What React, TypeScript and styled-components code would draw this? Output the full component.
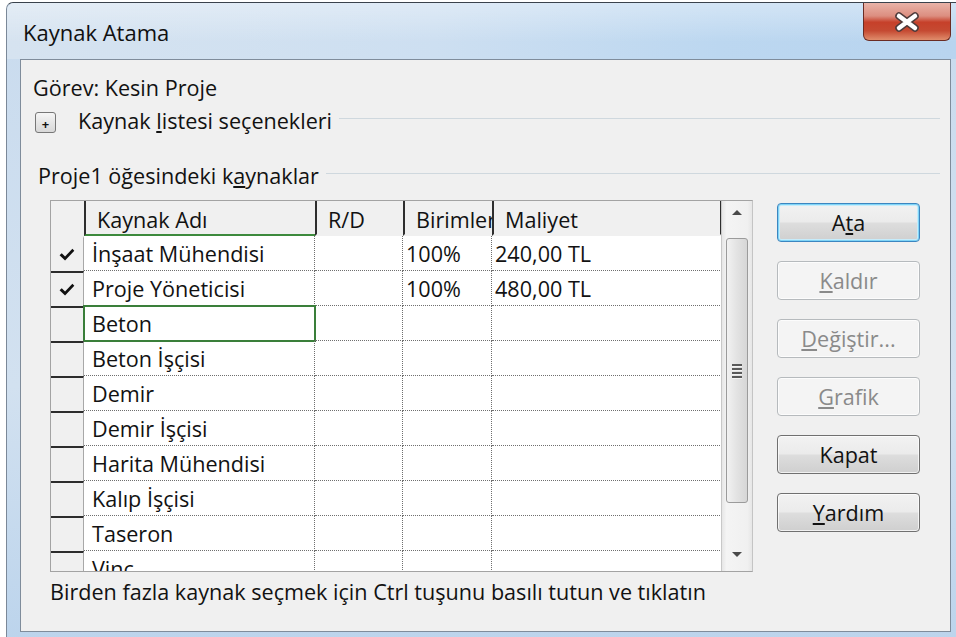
import React from 'react';
import styled, { createGlobalStyle } from 'styled-components';

const FONT = `"Open Sans", "Noto Sans", "Liberation Sans", sans-serif`;

const GlobalStyle = createGlobalStyle`
  html, body {
    margin: 0;
    padding: 0;
    background: #ffffff;
    overflow: hidden;
  }
  body {
    font-family: ${FONT};
    color: #121212;
  }
`;

interface Resource {
  name: string;
  rd?: string;
  units?: string;
  cost?: string;
  assigned?: boolean;
}

const RESOURCES: Resource[] = [
  { name: 'İnşaat Mühendisi', units: '100%', cost: '240,00 TL', assigned: true },
  { name: 'Proje Yöneticisi', units: '100%', cost: '480,00 TL', assigned: true },
  { name: 'Beton' },
  { name: 'Beton İşçisi' },
  { name: 'Demir' },
  { name: 'Demir İşçisi' },
  { name: 'Harita Mühendisi' },
  { name: 'Kalıp İşçisi' },
  { name: 'Taseron' },
  { name: 'Vinç' },
];

const COLS = { sel: 33, name: 231, rd: 88, units: 89, cost: 230 };

const Frame = styled.div`
  margin: 2px 0 0 6px;
  width: 950px;
  height: 640px;
  box-sizing: border-box;
  border-top: 1px solid #3a424c;
  border-left: 1px solid #7b8898;
  border-top-left-radius: 7px;
  background: linear-gradient(180deg, #c9dbee 0%, #d2e1f0 60%, #bcd4ec 100%);
  display: flex;
  flex-direction: column;
`;

const TitleBar = styled.div`
  height: 56px;
  display: flex;
  align-items: flex-start;
  background:
    linear-gradient(180deg, rgba(255, 255, 255, 0.35) 0%, rgba(255, 255, 255, 0) 70%),
    linear-gradient(90deg, #d6e3f0 0%, #cddff1 45%, #bcd7f0 75%, #b8d4ef 100%);
  border-top-left-radius: 7px;
`;

const Title = styled.div`
  padding: 15px 0 0 16px;
  font-size: 22px;
  line-height: 28px;
  color: #101010;
`;

const CloseButton = styled.div`
  margin-left: auto;
  margin-right: 5px;
  width: 88px;
  height: 38px;
  box-sizing: border-box;
  border: 1px solid #6a2c24;
  border-top: none;
  border-radius: 0 0 6px 6px;
  background: linear-gradient(
    180deg,
    #e9b3a8 0%,
    #dc8e80 35%,
    #c6402a 52%,
    #c54a32 75%,
    #e08d6c 100%
  );
  display: flex;
  align-items: center;
  justify-content: center;
`;

const Client = styled.div`
  margin: 0 5px 0 13px;
  height: 573px;
  box-sizing: border-box;
  border: 1px solid #7f8c9b;
  background: #f0f0f0;
  display: flex;
  flex-direction: column;
  font-size: 21.6px;
`;

const TaskLabel = styled.div`
  margin: 15px 0 0 12px;
  line-height: 26px;
`;

const LabelRow = styled.div<{ $indent: number; $top: number }>`
  display: flex;
  align-items: center;
  margin: ${(p) => p.$top}px 10px 0 ${(p) => p.$indent}px;
  height: 26px;
  gap: 7px;
`;

const Rule = styled.div`
  flex: 1;
  height: 0;
  border-top: 1px solid #cfd8de;
  margin-top: -4px;
`;

const ExpandBox = styled.div`
  width: 21px;
  height: 21px;
  box-sizing: border-box;
  border: 1px solid #777777;
  border-radius: 3px;
  background: linear-gradient(180deg, #f6f6f6 0%, #e6e6e6 50%, #d8d8d8 100%);
  display: flex;
  align-items: flex-end;
  justify-content: center;
  font-size: 13px;
  line-height: 16px;
  font-weight: 700;
  margin: 4px 15px 0 0;
`;

const Body = styled.div`
  display: flex;
  margin: 12px 0 0 29px;
`;

const GridBox = styled.div`
  width: 703px;
  height: 372px;
  box-sizing: border-box;
  border: 1px solid #a3a3a3;
  border-right-color: #c4c4c4;
  background: #ffffff;
  display: flex;
  overflow: hidden;
`;

const Table = styled.div`
  width: 671px;
  overflow: hidden;
`;

const HeaderRow = styled.div`
  display: flex;
  height: 35px;
  background: #f0f0f0;
`;

const HeaderCell = styled.div<{ $w: number; $mark?: boolean; $last?: boolean }>`
  width: ${(p) => p.$w}px;
  flex: none;
  box-sizing: border-box;
  border-left: 2px solid #2e2e2e;
  border-right: ${(p) => (p.$last ? '2px solid #2e2e2e' : 'none')};
  border-bottom: 2px solid ${(p) => (p.$mark ? '#3d8a3d' : 'transparent')};
  padding: 5px 0 0 11px;
  line-height: 28px;
  white-space: nowrap;
  overflow: hidden;
`;

const SelectorHead = styled.div`
  width: ${COLS.sel}px;
  flex: none;
`;

const Row = styled.div`
  display: flex;
  height: 35px;
`;

const SelectorCell = styled.div<{ $first: boolean }>`
  width: ${COLS.sel}px;
  flex: none;
  box-sizing: border-box;
  background: #f0f0f0;
  border-top: 2px solid ${(p) => (p.$first ? 'transparent' : '#2c2c2c')};
  border-right: 1px solid #a8a8a8;
  display: flex;
  align-items: center;
  justify-content: center;
`;

const Cell = styled.div<{ $w: number; $pad: number; $focus?: boolean }>`
  width: ${(p) => p.$w}px;
  flex: none;
  box-sizing: border-box;
  border-right: 1px dotted #6f6f6f;
  border-bottom: 1px dotted #6f6f6f;
  padding-left: ${(p) => p.$pad}px;
  line-height: 35px;
  white-space: nowrap;
  overflow: hidden;
  outline: ${(p) => (p.$focus ? '2px solid #3a7f3a' : 'none')};
  outline-offset: -1px;
`;

const ScrollBar = styled.div`
  width: 30px;
  flex: none;
  background: linear-gradient(90deg, #e6e6e6 0%, #f4f4f4 15%, #f0f0f0 85%, #e6e6e6 100%);
  border-left: 1px solid #c8c8c8;
  display: flex;
  flex-direction: column;
  align-items: center;
`;

const Arrow = styled.div<{ $down?: boolean }>`
  height: 35px;
  width: 100%;
  display: flex;
  align-items: ${(p) => (p.$down ? 'flex-start' : 'center')};
  justify-content: center;
  padding-top: ${(p) => (p.$down ? '16px' : '0')};
  box-sizing: border-box;
  &::before {
    content: '';
    width: 0;
    height: 0;
    border-left: 5px solid transparent;
    border-right: 5px solid transparent;
    ${(p) =>
      p.$down ? 'border-top: 5px solid #4a4a4a;' : 'border-bottom: 5px solid #4a4a4a; margin-top: -12px;'}
  }
`;

const Thumb = styled.div`
  width: 22px;
  height: 265px;
  margin-top: 2px;
  box-sizing: border-box;
  border: 1px solid #9b9b9b;
  border-radius: 3px;
  background: linear-gradient(90deg, #f2f2f2 0%, #e4e4e4 45%, #d6d6d6 100%);
  display: flex;
  flex-direction: column;
  align-items: center;
  justify-content: center;
  gap: 2px;
`;

const Grip = styled.div`
  width: 10px;
  height: 2px;
  background: #5a5a5a;
  box-shadow: 0 1px 0 #f4f4f4;
`;

const Track = styled.div`
  flex: 1;
`;

const Buttons = styled.div`
  display: flex;
  flex-direction: column;
  gap: 19px;
  margin: 3px 0 0 24px;
`;

const Button = styled.div<{ $default?: boolean; $disabled?: boolean }>`
  width: 143px;
  height: 39px;
  box-sizing: border-box;
  border: 1px solid ${(p) => (p.$default ? '#3c86c0' : p.$disabled ? '#b6babd' : '#707070')};
  border-radius: 4px;
  background: ${(p) =>
    p.$disabled
      ? '#f4f4f4'
      : 'linear-gradient(180deg, #f2f2f2 0%, #ebebeb 48%, #dddddd 52%, #cfcfcf 100%)'};
  box-shadow: ${(p) =>
    p.$default ? 'inset 0 0 0 1px #7fd4f7, inset 0 0 0 2px #c6ecfb' : 'inset 0 0 0 1px rgba(255,255,255,0.7)'};
  color: ${(p) => (p.$disabled ? '#8a8a8a' : '#121212')};
  display: flex;
  align-items: center;
  justify-content: center;
  line-height: 28px;
`;

const Footer = styled.div`
  margin: 6px 0 0 29px;
  line-height: 28px;
`;

const CheckMark = () => (
  <svg width="16" height="14" viewBox="0 0 14 12">
    <path d="M0.5 6.2 L2.4 4.4 L5.3 7.3 L11.7 0.6 L13.4 2.3 L5.3 10.8 Z" fill="#111" />
  </svg>
);

const CloseGlyph = () => (
  <svg width="28" height="20" viewBox="0 0 28 20">
    <path d="M6 4 L22 16 M22 4 L6 16" stroke="#4d3a3a" strokeWidth="7.5" strokeLinecap="round" />
    <path d="M6 4 L22 16 M22 4 L6 16" stroke="#ffffff" strokeWidth="4.5" strokeLinecap="round" />
  </svg>
);

const App = () => {
  return (
    <>
      <GlobalStyle />
      <Frame>
        <TitleBar>
          <Title>Kaynak Atama</Title>
          <CloseButton>
            <CloseGlyph />
          </CloseButton>
        </TitleBar>
        <Client>
          <TaskLabel>Görev: Kesin Proje</TaskLabel>
          <LabelRow $indent={14} $top={6}>
            <ExpandBox>+</ExpandBox>
            <span>
              Kaynak <u>l</u>istesi seçenekleri
            </span>
            <Rule />
          </LabelRow>
          <LabelRow $indent={17} $top={29}>
            <span>
              Proje1 öğesindeki k<u>a</u>ynaklar
            </span>
            <Rule />
          </LabelRow>
          <Body>
            <GridBox>
              <Table>
                <HeaderRow>
                  <SelectorHead />
                  <HeaderCell $w={COLS.name} $mark>
                    Kaynak Adı
                  </HeaderCell>
                  <HeaderCell $w={COLS.rd}>R/D</HeaderCell>
                  <HeaderCell $w={COLS.units}>Birimler</HeaderCell>
                  <HeaderCell $w={COLS.cost} $last>
                    Maliyet
                  </HeaderCell>
                </HeaderRow>
                {RESOURCES.map((r, i) => (
                  <Row key={r.name}>
                    <SelectorCell $first={i === 0}>{r.assigned && <CheckMark />}</SelectorCell>
                    <Cell $w={COLS.name} $pad={8} $focus={i === 2}>
                      {r.name}
                    </Cell>
                    <Cell $w={COLS.rd} $pad={3}>
                      {r.rd}
                    </Cell>
                    <Cell $w={COLS.units} $pad={3}>
                      {r.units}
                    </Cell>
                    <Cell $w={COLS.cost} $pad={3}>
                      {r.cost}
                    </Cell>
                  </Row>
                ))}
              </Table>
              <ScrollBar>
                <Arrow />
                <Thumb>
                  <Grip />
                  <Grip />
                  <Grip />
                  <Grip />
                </Thumb>
                <Track />
                <Arrow $down />
              </ScrollBar>
            </GridBox>
            <Buttons>
              <Button $default>
                <span>
                  A<u>t</u>a
                </span>
              </Button>
              <Button $disabled>
                <span>
                  <u>K</u>aldır
                </span>
              </Button>
              <Button $disabled>
                <span>
                  <u>D</u>eğiştir...
                </span>
              </Button>
              <Button $disabled>
                <span>
                  <u>G</u>rafik
                </span>
              </Button>
              <Button>Kapat</Button>
              <Button>
                <span>
                  <u>Y</u>ardım
                </span>
              </Button>
            </Buttons>
          </Body>
          <Footer>Birden fazla kaynak seçmek için Ctrl tuşunu basılı tutun ve tıklatın</Footer>
        </Client>
      </Frame>
    </>
  );
};

export default App;
